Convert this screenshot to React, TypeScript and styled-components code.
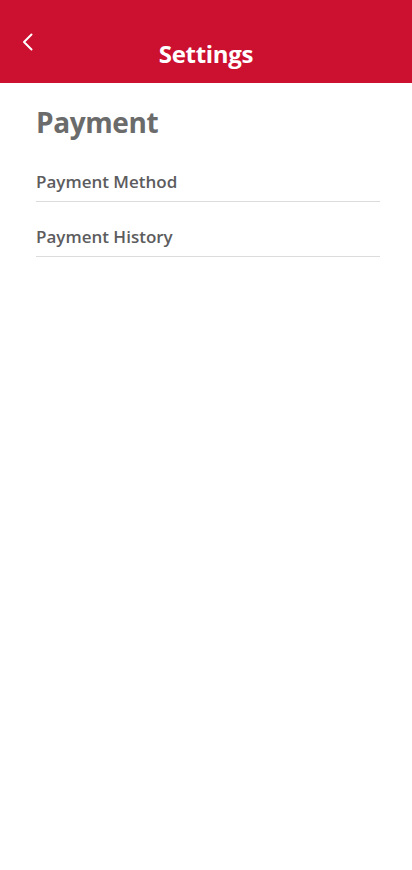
import styled, { createGlobalStyle } from "styled-components";

const GlobalStyle = createGlobalStyle`
  * {
    box-sizing: border-box;
    margin: 0;
    padding: 0;
  }
  body {
    background: #ffffff;
    font-family: "Open Sans", "Noto Sans", sans-serif;
  }
`;

const Page = styled.div`
  width: 412px;
  min-height: 870px;
  background: #ffffff;
`;

const Header = styled.header`
  height: 83px;
  background-color: #cc1030;
  display: grid;
  grid-template-columns: 60px 1fr 60px;
  align-items: start;
`;

const BackButton = styled.button`
  border: none;
  background: none;
  padding: 33px 0 0 22px;
  display: flex;
  justify-content: flex-start;
  cursor: pointer;
`;

const HeaderTitle = styled.h1`
  margin-top: 37px;
  text-align: center;
  color: #ffffff;
  font-size: 24px;
  font-weight: 700;
  line-height: 34px;
  letter-spacing: -0.3px;
`;

const Content = styled.main`
  padding: 20px 32px 0 36px;
`;

const SectionTitle = styled.h2`
  color: #6b6b6b;
  font-size: 28px;
  font-weight: 700;
  line-height: 38px;
  letter-spacing: -0.4px;
  margin-bottom: 29px;
`;

const MenuList = styled.ul`
  list-style: none;
  display: flex;
  flex-direction: column;
  gap: 23px;
`;

const MenuItem = styled.li`
  color: #5c5c5e;
  font-size: 17px;
  font-weight: 600;
  line-height: 24px;
  letter-spacing: 0;
  padding-bottom: 7px;
  border-bottom: 1px solid #dcdcdc;
  cursor: pointer;
`;

const items = ["Payment Method", "Payment History"];

const App = () => {
  return (
    <Page>
      <GlobalStyle />
      <Header>
        <BackButton aria-label="Back">
          <svg width="12" height="18" viewBox="0 0 12 18" fill="none">
            <path
              d="M9.5 1.5 L2 9 L9.5 16.5"
              stroke="#ffffff"
              strokeWidth="2"
              strokeLinecap="round"
              strokeLinejoin="round"
            />
          </svg>
        </BackButton>
        <HeaderTitle>Settings</HeaderTitle>
        <div />
      </Header>
      <Content>
        <SectionTitle>Payment</SectionTitle>
        <MenuList>
          {items.map((item) => (
            <MenuItem key={item}>{item}</MenuItem>
          ))}
        </MenuList>
      </Content>
    </Page>
  );
};

export default App;
